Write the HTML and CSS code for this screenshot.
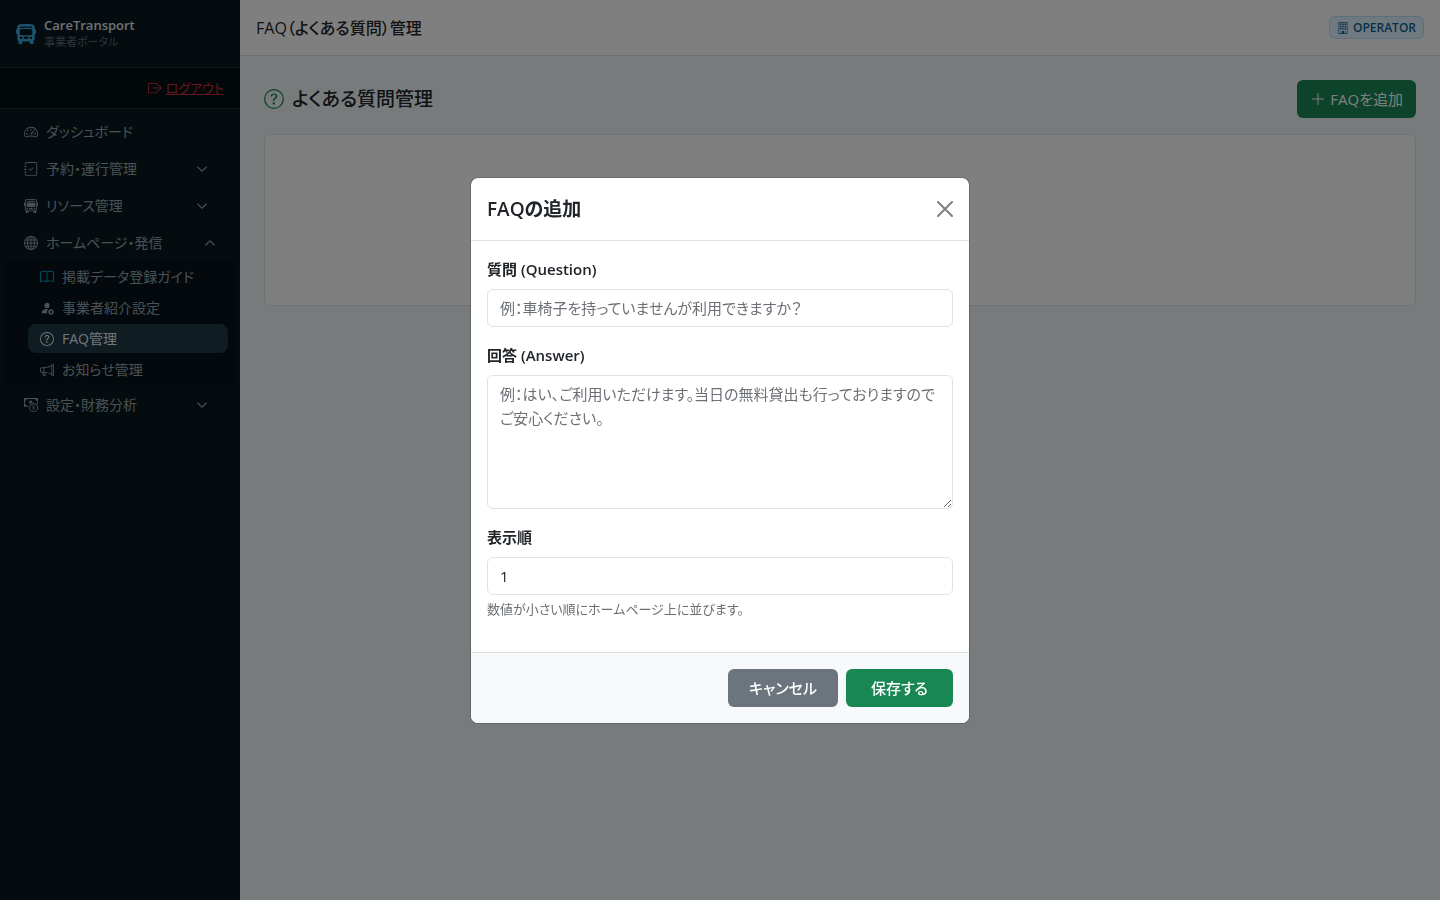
FILE: index.html
```
<!DOCTYPE html>
<html lang="ja">
<head>
  <meta charset="UTF-8">
  <meta name="viewport" content="width=device-width, initial-scale=1.0">
  <title>FAQ（よくある質問）管理 | CareTransport</title>
  <link rel="stylesheet" href="styles.css">
</head>
<body>

  <div class="layout">
    <!-- サイドバー -->
    <aside class="sidebar">
      <div class="brand">
        <svg class="brand-icon" viewBox="0 0 16 16"><path d="M16 7a1 1 0 0 1-1 1v3.5c0 .818-.393 1.544-1 2v2a.5.5 0 0 1-.5.5h-2a.5.5 0 0 1-.5-.5V14H5v1.5a.5.5 0 0 1-.5.5h-2a.5.5 0 0 1-.5-.5v-2a2.5 2.5 0 0 1-1-2V8a1 1 0 0 1-1-1V5a1 1 0 0 1 1-1V2.64C1 1.452 1.845.408 3.064.268A44 44 0 0 1 8 0c2.1 0 3.792.136 4.936.268C14.155.408 15 1.452 15 2.64V4a1 1 0 0 1 1 1zM3.552 3.22A43 43 0 0 1 8 3c1.837 0 3.353.107 4.448.22a.5.5 0 0 0 .104-.994A44 44 0 0 0 8 2c-1.876 0-3.426.109-4.552.226a.5.5 0 1 0 .104.994M8 4c-1.876 0-3.426.109-4.552.226A.5.5 0 0 0 3 4.723v3.554a.5.5 0 0 0 .448.497C4.574 8.891 6.124 9 8 9s3.426-.109 4.552-.226A.5.5 0 0 0 13 8.277V4.723a.5.5 0 0 0-.448-.497A44 44 0 0 0 8 4m-3 7a1 1 0 1 0-2 0 1 1 0 0 0 2 0m8 0a1 1 0 1 0-2 0 1 1 0 0 0 2 0m-7 0a1 1 0 0 0 1 1h2a1 1 0 1 0 0-2H7a1 1 0 0 0-1 1"/></svg>
        <div>
          <div class="brand-name">CareTransport</div>
          <div class="brand-sub">事業者ポータル</div>
        </div>
      </div>

      <div class="logout-row">
        <svg class="icon" viewBox="0 0 16 16"><path d="M10 12.5a.5.5 0 0 1-.5.5h-8a.5.5 0 0 1-.5-.5v-9a.5.5 0 0 1 .5-.5h8a.5.5 0 0 1 .5.5v2a.5.5 0 0 0 1 0v-2A1.5 1.5 0 0 0 9.5 2h-8A1.5 1.5 0 0 0 0 3.5v9A1.5 1.5 0 0 0 1.5 14h8a1.5 1.5 0 0 0 1.5-1.5v-2a.5.5 0 0 0-1 0z"/><path d="M15.854 8.354a.5.5 0 0 0 0-.708l-3-3a.5.5 0 0 0-.708.708L14.293 7.5H5.5a.5.5 0 0 0 0 1h8.793l-2.147 2.146a.5.5 0 0 0 .708.708z"/></svg>
        <a href="#">ログアウト</a>
      </div>

      <nav class="nav">
        <a class="nav-link" href="#">
          <svg class="icon" viewBox="0 0 16 16"><path d="M8 4a.5.5 0 0 1 .5.5V6a.5.5 0 0 1-1 0V4.5A.5.5 0 0 1 8 4M3.732 5.732a.5.5 0 0 1 .707 0l.915.914a.5.5 0 1 1-.708.708l-.914-.915a.5.5 0 0 1 0-.707M2 10a.5.5 0 0 1 .5-.5h1.586a.5.5 0 0 1 0 1H2.5A.5.5 0 0 1 2 10m9.5 0a.5.5 0 0 1 .5-.5h1.5a.5.5 0 0 1 0 1H12a.5.5 0 0 1-.5-.5m.754-4.246a.39.39 0 0 0-.527-.02L7.547 9.31a.91.91 0 1 0 1.302 1.258l3.434-4.297a.39.39 0 0 0-.029-.518z"/><path d="M0 10a8 8 0 1 1 15.547 2.661c-.442 1.253-1.845 1.602-2.932 1.25C11.309 13.488 9.475 13 8 13c-1.474 0-3.31.488-4.615.911-1.087.352-2.49.003-2.932-1.25A8 8 0 0 1 0 10m8-7a7 7 0 0 0-6.603 9.329c.203.575.923.876 1.68.63C4.397 12.533 6.358 12 8 12s3.604.532 4.923.96c.757.245 1.477-.056 1.68-.631A7 7 0 0 0 8 3"/></svg>
          <span>ダッシュボード</span>
        </a>
        <a class="nav-link" href="#">
          <svg class="icon" viewBox="0 0 16 16"><path d="M10.854 6.146a.5.5 0 0 1 0 .708l-3 3a.5.5 0 0 1-.708 0l-1.5-1.5a.5.5 0 1 1 .708-.708L7.5 8.793l2.646-2.647a.5.5 0 0 1 .708 0"/><path d="M3 0h10a2 2 0 0 1 2 2v12a2 2 0 0 1-2 2H3a2 2 0 0 1-2-2v-1h1v1a1 1 0 0 0 1 1h10a1 1 0 0 0 1-1V2a1 1 0 0 0-1-1H3a1 1 0 0 0-1 1v1H1V2a2 2 0 0 1 2-2"/><path d="M1 5v-.5a.5.5 0 0 1 1 0V5h.5a.5.5 0 0 1 0 1h-2a.5.5 0 0 1 0-1zm0 3v-.5a.5.5 0 0 1 1 0V8h.5a.5.5 0 0 1 0 1h-2a.5.5 0 0 1 0-1zm0 3v-.5a.5.5 0 0 1 1 0v.5h.5a.5.5 0 0 1 0 1h-2a.5.5 0 0 1 0-1z"/></svg>
          <span>予約・運行管理</span>
          <svg class="chevron" viewBox="0 0 16 16"><path d="M2 5l6 6 6-6"/></svg>
        </a>
        <a class="nav-link" href="#">
          <svg class="icon" viewBox="0 0 16 16"><path d="M5 11a1 1 0 1 1-2 0 1 1 0 0 1 2 0m8 0a1 1 0 1 1-2 0 1 1 0 0 1 2 0m-6-1a1 1 0 1 0 0 2h2a1 1 0 1 0 0-2zm1-6c-1.876 0-3.426.109-4.552.226A.5.5 0 0 0 3 4.723v3.554a.5.5 0 0 0 .448.497C4.574 8.891 6.124 9 8 9s3.426-.109 4.552-.226A.5.5 0 0 0 13 8.277V4.723a.5.5 0 0 0-.448-.497A44 44 0 0 0 8 4m0-1c-1.837 0-3.353.107-4.448.22a.5.5 0 1 1-.104-.994A44 44 0 0 1 8 2c1.876 0 3.426.109 4.552.226a.5.5 0 1 1-.104.994A43 43 0 0 0 8 3"/><path d="M15 8a1 1 0 0 0 1-1V5a1 1 0 0 0-1-1V2.64c0-1.188-.845-2.232-2.064-2.372A44 44 0 0 0 8 0C5.9 0 4.208.136 3.064.268 1.845.408 1 1.452 1 2.64V4a1 1 0 0 0-1 1v2a1 1 0 0 0 1 1v3.5c0 .818.393 1.544 1 2v2a.5.5 0 0 0 .5.5h2a.5.5 0 0 0 .5-.5V14h6v1.5a.5.5 0 0 0 .5.5h2a.5.5 0 0 0 .5-.5v-2c.607-.456 1-1.182 1-2zM8 1c2.056 0 3.71.134 4.822.261.676.078 1.178.66 1.178 1.379v8.86a1.5 1.5 0 0 1-1.5 1.5h-9A1.5 1.5 0 0 1 2 11.5V2.64c0-.72.502-1.301 1.178-1.379A43 43 0 0 1 8 1"/></svg>
          <span>リソース管理</span>
          <svg class="chevron" viewBox="0 0 16 16"><path d="M2 5l6 6 6-6"/></svg>
        </a>
        <a class="nav-link open" href="#">
          <svg class="icon" viewBox="0 0 16 16"><path d="M0 8a8 8 0 1 1 16 0A8 8 0 0 1 0 8m7.5-6.923c-.67.204-1.335.82-1.887 1.855A8 8 0 0 0 5.145 4H7.5zM4.09 4a9.3 9.3 0 0 1 .64-1.539 7 7 0 0 1 .597-.933A7.03 7.03 0 0 0 2.255 4zm-.582 3.5c.03-.877.138-1.718.312-2.5H1.674a7 7 0 0 0-.656 2.5zM4.847 5a12.5 12.5 0 0 0-.338 2.5H7.5V5zM8.5 5v2.5h2.99a12.5 12.5 0 0 0-.337-2.5zM4.51 8.5a12.5 12.5 0 0 0 .337 2.5H7.5V8.5zm3.99 0V11h2.653c.187-.765.306-1.608.338-2.5zM5.145 12q.208.58.468 1.068c.552 1.035 1.218 1.65 1.887 1.855V12zm.182 2.472a7 7 0 0 1-.597-.933A9.3 9.3 0 0 1 4.09 12H2.255a7 7 0 0 0 3.072 2.472M3.82 11a13.7 13.7 0 0 1-.312-2.5h-2.49c.062.89.291 1.733.656 2.5zm6.853 3.472A7 7 0 0 0 13.745 12H11.91a9.3 9.3 0 0 1-.64 1.539 7 7 0 0 1-.597.933M8.5 12v2.923c.67-.204 1.335-.82 1.887-1.855q.26-.487.468-1.068zm3.68-1h2.146c.365-.767.594-1.61.656-2.5h-2.49a13.7 13.7 0 0 1-.312 2.5m2.802-3.5a7 7 0 0 0-.656-2.5H12.18c.174.782.282 1.623.312 2.5zM11.27 2.461c.247.464.462.98.64 1.539h1.835a7 7 0 0 0-3.072-2.472c.218.284.418.598.597.933M10.855 4a8 8 0 0 0-.468-1.068C9.835 1.897 9.17 1.282 8.5 1.077V4z"/></svg>
          <span>ホームページ・発信</span>
          <svg class="chevron" viewBox="0 0 16 16"><path d="M2 11l6-6 6 6"/></svg>
        </a>
        <div class="submenu">
          <a class="sub-link" href="#">
            <svg class="icon icon-info" viewBox="0 0 16 16"><path d="M1 2.828c.885-.37 2.154-.769 3.388-.893 1.33-.134 2.458.063 3.112.752v9.746c-.935-.53-2.12-.603-3.213-.493-1.18.12-2.37.461-3.287.811zm7.5-.141c.654-.689 1.782-.886 3.112-.752 1.234.124 2.503.523 3.388.893v9.923c-.918-.35-2.107-.692-3.287-.81-1.094-.111-2.278-.039-3.213.492zM8 1.783C7.015.936 5.587.81 4.287.94c-1.514.153-3.042.672-3.994 1.105A.5.5 0 0 0 0 2.5v11a.5.5 0 0 0 .707.455c.882-.4 2.303-.881 3.68-1.02 1.409-.142 2.59.087 3.223.877a.5.5 0 0 0 .78 0c.633-.79 1.814-1.019 3.222-.877 1.378.139 2.8.62 3.681 1.02A.5.5 0 0 0 16 13.5v-11a.5.5 0 0 0-.293-.455c-.952-.433-2.48-.952-3.994-1.105C10.413.809 8.985.936 8 1.783"/></svg>
            <span>掲載データ登録ガイド</span>
          </a>
          <a class="sub-link" href="#">
            <svg class="icon" viewBox="0 0 16 16"><path d="M11 5a3 3 0 1 1-6 0 3 3 0 0 1 6 0m-9 8c0 1 1 1 1 1h5.256A4.5 4.5 0 0 1 8 12.5a4.5 4.5 0 0 1 1.544-3.393Q8.844 9.002 8 9c-5 0-6 3-6 4"/><circle cx="12.5" cy="12.5" r="2" fill="none" stroke="currentColor" stroke-width="1.4"/><path d="M12.5 9v1.4M12.5 14.6V16M9 12.5h1.4M14.6 12.5H16M10 10l1 1M14 14l1 1M15 10l-1 1M11 14l-1 1" fill="none" stroke="currentColor" stroke-width="1.2"/></svg>
            <span>事業者紹介設定</span>
          </a>
          <a class="sub-link active" href="#">
            <svg class="icon" viewBox="0 0 16 16"><path d="M8 15A7 7 0 1 1 8 1a7 7 0 0 1 0 14m0 1A8 8 0 1 0 8 0a8 8 0 0 0 0 16"/><path d="M5.255 5.786a.237.237 0 0 0 .241.247h.825c.138 0 .248-.113.266-.25.09-.656.54-1.134 1.342-1.134.686 0 1.314.343 1.314 1.168 0 .635-.374.927-.965 1.371-.673.489-1.206 1.06-1.168 1.987l.003.217a.25.25 0 0 0 .25.246h.811a.25.25 0 0 0 .25-.25v-.105c0-.718.273-.927 1.01-1.486.609-.463 1.244-.977 1.244-2.056 0-1.511-1.276-2.241-2.673-2.241-1.267 0-2.655.59-2.75 2.286m1.557 5.763c0 .533.425.927 1.01.927.609 0 1.028-.394 1.028-.927 0-.552-.42-.94-1.029-.94-.584 0-1.009.388-1.009.94"/></svg>
            <span>FAQ管理</span>
          </a>
          <a class="sub-link" href="#">
            <svg class="icon" viewBox="0 0 16 16"><path d="M13 2.5a1.5 1.5 0 0 1 3 0v11a1.5 1.5 0 0 1-3 0v-.214c-2.162-1.241-4.49-1.843-6.912-2.083l.405 2.712A1 1 0 0 1 5.51 15.1h-.548a1 1 0 0 1-.916-.599l-1.85-3.49-.202-.003A2.014 2.014 0 0 1 0 9V7a2.02 2.02 0 0 1 1.992-2.013 75 75 0 0 0 2.483-.075c3.043-.154 6.148-.849 8.525-2.199zm1 0v11a.5.5 0 0 0 1 0v-11a.5.5 0 0 0-1 0m-1 1.35c-2.344 1.205-5.209 1.842-8 2.033v4.233q.27.015.537.036c2.568.189 5.093.744 7.463 1.993zm-9 6.215v-4.13a95 95 0 0 1-1.992.052A1.02 1.02 0 0 0 1 7v2c0 .55.448 1.002 1.006 1.009A61 61 0 0 1 4 10.065m-.657.975 1.609 3.037.01.024h.548l-.002-.014-.443-2.966a68 68 0 0 0-1.722-.082z"/></svg>
            <span>お知らせ管理</span>
          </a>
        </div>
        <a class="nav-link" href="#">
          <svg class="icon" viewBox="0 0 16 16"><path fill-rule="evenodd" d="M11 15a4 4 0 1 0 0-8 4 4 0 0 0 0 8m5-4a5 5 0 1 1-10 0 5 5 0 0 1 10 0"/><path d="M9.438 11.944c.047.596.518 1.06 1.363 1.116v.44h.375v-.443c.875-.061 1.386-.529 1.386-1.207 0-.618-.39-.936-1.09-1.1l-.296-.07v-1.2c.376.043.614.248.671.532h.658c-.047-.575-.54-1.024-1.329-1.073V8.5h-.375v.45c-.747.073-1.255.522-1.255 1.158 0 .562.378.92 1.007 1.066l.248.061v1.272c-.384-.058-.639-.27-.696-.563h-.668zm1.36-1.354c-.369-.085-.569-.26-.569-.522 0-.294.216-.514.572-.578v1.1zm.432.746c.449.104.655.272.655.569 0 .339-.257.571-.709.614v-1.195z"/><path d="M1 0a1 1 0 0 0-1 1v8a1 1 0 0 0 1 1h4.083q.088-.517.258-1H3a2 2 0 0 0-2-2V3a2 2 0 0 0 2-2h10a2 2 0 0 0 2 2v3.528c.38.34.717.728 1 1.154V1a1 1 0 0 0-1-1z"/><path d="M9.998 5.083 10 5a2 2 0 1 0-3.132 1.65 6 6 0 0 1 3.13-1.567"/></svg>
          <span>設定・財務分析</span>
          <svg class="chevron" viewBox="0 0 16 16"><path d="M2 5l6 6 6-6"/></svg>
        </a>
      </nav>
    </aside>

    <!-- メイン -->
    <div class="main">
      <header class="topbar">
        <div class="topbar-title">FAQ（よくある質問）管理</div>
        <span class="role-badge">
          <svg viewBox="0 0 16 16"><path fill-rule="evenodd" d="M2 1a1 1 0 0 1 1-1h10a1 1 0 0 1 1 1v14a1 1 0 0 1-1 1H3a1 1 0 0 1-1-1zm11 0H3v14h3v-2.500a.5.5 0 0 1 .5-.5h3a.5.5 0 0 1 .5.5V15h3z"/><path d="M4 2h2v2H4zM7 2h2v2H7zM10 2h2v2h-2zM4 5h2v2H4zM7 5h2v2H7zM10 5h2v2h-2zM4 8h2v2H4zM7 8h2v2H7zM10 8h2v2h-2z"/></svg>
          OPERATOR
        </span>
      </header>

      <main class="content">
        <div class="page-head">
          <h1>
            <svg viewBox="0 0 16 16"><path d="M8 15A7 7 0 1 1 8 1a7 7 0 0 1 0 14m0 1A8 8 0 1 0 8 0a8 8 0 0 0 0 16"/><path d="M5.255 5.786a.237.237 0 0 0 .241.247h.825c.138 0 .248-.113.266-.25.09-.656.54-1.134 1.342-1.134.686 0 1.314.343 1.314 1.168 0 .635-.374.927-.965 1.371-.673.489-1.206 1.06-1.168 1.987l.003.217a.25.25 0 0 0 .25.246h.811a.25.25 0 0 0 .25-.25v-.105c0-.718.273-.927 1.01-1.486.609-.463 1.244-.977 1.244-2.056 0-1.511-1.276-2.241-2.673-2.241-1.267 0-2.655.59-2.75 2.286m1.557 5.763c0 .533.425.927 1.01.927.609 0 1.028-.394 1.028-.927 0-.552-.42-.94-1.029-.94-.584 0-1.009.388-1.009.94"/></svg>
            よくある質問管理
          </h1>
          <button type="button" class="btn btn-success btn-add">
            <svg viewBox="0 0 16 16"><path d="M8 2a.5.5 0 0 1 .5.5v5h5a.5.5 0 0 1 0 1h-5v5a.5.5 0 0 1-1 0v-5h-5a.5.5 0 0 1 0-1h5v-5A.5.5 0 0 1 8 2"/></svg>
            FAQを追加
          </button>
        </div>
        <div class="card"></div>
      </main>
    </div>
  </div>

  <!-- FAQ追加モーダル -->
  <div class="backdrop">
    <form class="modal" role="dialog" aria-modal="true" aria-labelledby="modalTitle">
      <div class="modal-header">
        <h2 id="modalTitle">FAQの追加</h2>
        <button type="button" class="btn-close" aria-label="閉じる">
          <svg viewBox="0 0 16 16"><path d="M1 1l14 14M15 1L1 15"/></svg>
        </button>
      </div>
      <div class="modal-body">
        <div class="field">
          <label for="question">質問 (Question)</label>
          <input type="text" id="question" placeholder="例：車椅子を持っていませんが利用できますか？">
        </div>
        <div class="field">
          <label for="answer">回答 (Answer)</label>
          <textarea id="answer" rows="5" placeholder="例：はい、ご利用いただけます。当日の無料貸出も行っておりますのでご安心ください。"></textarea>
        </div>
        <div class="field">
          <label for="sortOrder">表示順</label>
          <input type="number" id="sortOrder" value="1">
          <div class="form-text">数値が小さい順にホームページ上に並びます。</div>
        </div>
      </div>
      <div class="modal-footer">
        <button type="button" class="btn btn-secondary">キャンセル</button>
        <button type="submit" class="btn btn-success">保存する</button>
      </div>
    </form>
  </div>

</body>
</html>
```
FILE: styles.css
```
* {
  box-sizing: border-box;
}

body {
  margin: 0;
  font-family: "Open Sans", "Noto Sans CJK JP", sans-serif;
  font-size: 15px;
  line-height: 24px;
  font-feature-settings: "palt";
  color: #212529;
  background-color: #f0f7f8;
}

svg {
  fill: currentColor;
  flex-shrink: 0;
}

.layout {
  display: flex;
  min-height: 100vh;
}

/* サイドバー */
.sidebar {
  width: 240px;
  flex-shrink: 0;
  background-color: #08191f;
  color: #94a3ab;
}

.brand {
  display: flex;
  align-items: center;
  gap: 8px;
  padding: 17px 16px;
  border-bottom: 1px solid #1e323b;
}

.brand-icon {
  width: 20px;
  height: 20px;
  color: #38a9dc;
}

.brand-name {
  font-size: 13px;
  font-weight: 600;
  line-height: 17px;
  color: #dfe5e8;
}

.brand-sub {
  font-size: 11px;
  line-height: 16px;
  color: #5d686e;
}

.logout-row {
  display: flex;
  align-items: center;
  justify-content: flex-end;
  gap: 4px;
  padding: 8px 16px;
  font-size: 13px;
  color: #c52f3f;
  background-color: #050e13;
  border-bottom: 1px solid #1e323b;
}

.logout-row a {
  color: inherit;
}

.icon {
  width: 14px;
  height: 14px;
}

.nav {
  padding: 4px 0;
}

.nav-link {
  display: flex;
  align-items: center;
  gap: 8px;
  height: 37px;
  padding: 0 32px 0 24px;
  font-size: 14px;
  color: inherit;
  text-decoration: none;
}

.nav-link.open {
  padding-right: 24px;
}

.chevron {
  width: 12px;
  height: 12px;
  margin-left: auto;
  fill: none;
  stroke: currentColor;
  stroke-width: 1.5;
}

.submenu {
  display: flex;
  flex-direction: column;
  gap: 2px;
  margin: 0 4px;
  padding: 1px 8px 2px 24px;
  background-color: #071218;
}

.sub-link {
  display: flex;
  align-items: center;
  gap: 8px;
  height: 29px;
  padding: 0 12px;
  border-radius: 8px;
  font-size: 14px;
  color: inherit;
  text-decoration: none;
}

.sub-link.active {
  background-color: #1e3a46;
  color: #e4eaed;
}

.icon-info {
  color: #0da2cc;
}

/* メイン */
.main {
  flex: 1;
  min-width: 0;
}

.topbar {
  display: flex;
  align-items: center;
  justify-content: space-between;
  height: 56px;
  padding: 0 16px;
  background-color: #fff;
  border-bottom: 1px solid #d8e2e6;
}

.topbar-title {
  font-size: 16px;
  font-weight: 500;
}

.role-badge {
  display: flex;
  align-items: center;
  gap: 4px;
  padding: 2px 7px;
  font-size: 12px;
  font-weight: 600;
  line-height: 17px;
  color: #0b6394;
  background-color: #e0f2fe;
  border: 1px solid #bae0f5;
  border-radius: 6px;
}

.role-badge svg {
  width: 12px;
  height: 12px;
}

.content {
  padding: 24px;
}

.page-head {
  display: flex;
  align-items: center;
  justify-content: space-between;
  margin-bottom: 16px;
}

.page-head h1 {
  display: flex;
  align-items: center;
  gap: 8px;
  margin: 0;
  font-size: 19px;
  font-weight: 500;
}

.page-head h1 svg {
  width: 20px;
  height: 20px;
  color: #198754;
}

.card {
  min-height: 172px;
  background-color: #fff;
  border: 1px solid #dbe5e9;
  border-radius: 6px;
}

/* ボタン */
.btn {
  padding: 6px 24px;
  border: 1px solid transparent;
  border-radius: 6px;
  font: inherit;
  font-weight: 500;
  font-feature-settings: inherit;
  color: #fff;
  cursor: pointer;
}

.btn-success {
  background-color: #198754;
}

.btn-secondary {
  padding: 6px 20px;
  background-color: #6c757d;
}

.btn-add {
  display: flex;
  align-items: center;
  gap: 4px;
  padding: 6px 12px;
  font-weight: 400;
}

.btn-add svg {
  width: 16px;
  height: 16px;
}

/* モーダル */
.backdrop {
  position: fixed;
  inset: 0;
  display: flex;
  align-items: center;
  justify-content: center;
  background-color: rgba(0, 0, 0, 0.5);
}

.modal {
  width: 100%;
  max-width: 500px;
  background-color: #fff;
  background-clip: padding-box;
  border: 1px solid rgba(0, 0, 0, 0.175);
  border-radius: 8px;
  overflow: hidden;
}

.modal-header {
  display: flex;
  align-items: center;
  justify-content: space-between;
  padding: 16px;
  border-bottom: 1px solid #dee2e6;
}

.modal-header h2 {
  margin: 0;
  font-size: 19px;
  font-weight: 600;
  line-height: 30px;
}

.btn-close {
  display: flex;
  padding: 0;
  border: 0;
  background: none;
  color: #7f7f7f;
  cursor: pointer;
}

.btn-close svg {
  width: 16px;
  height: 16px;
  fill: none;
  stroke: currentColor;
  stroke-width: 2;
  stroke-linecap: round;
}

.modal-body {
  padding: 16px;
}

.field {
  margin-bottom: 16px;
}

.field label {
  display: block;
  margin-bottom: 8px;
  font-weight: 600;
}

.field input,
.field textarea {
  display: block;
  width: 100%;
  padding: 6px 12px;
  border: 1px solid #dee2e6;
  border-radius: 6px;
  font: inherit;
  font-feature-settings: inherit;
  color: #212529;
  background-color: #fff;
}

.field textarea {
  resize: vertical;
}

.field ::placeholder {
  color: #6c7075;
}

.form-text {
  margin-top: 4px;
  font-size: 13px;
  line-height: 21px;
  color: #6c7075;
}

.modal-footer {
  display: flex;
  justify-content: flex-end;
  gap: 8px;
  padding: 16px;
  background-color: #f8f9fb;
  border-top: 1px solid #dee2e6;
}
```
